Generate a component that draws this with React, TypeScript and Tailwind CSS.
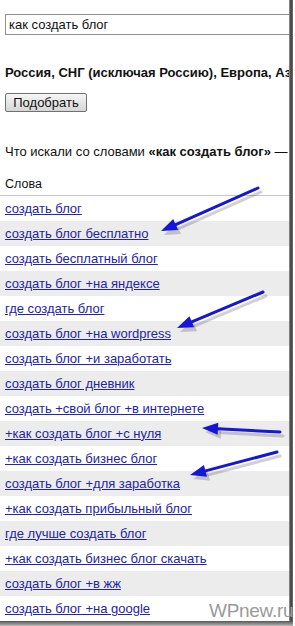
import React from "react";

const rows = [
  "создать блог",
  "создать блог бесплатно",
  "создать бесплатный блог",
  "создать блог +на яндексе",
  "где создать блог",
  "создать блог +на wordpress",
  "создать блог +и заработать",
  "создать блог дневник",
  "создать +свой блог +в интернете",
  "+как создать блог +с нуля",
  "+как создать бизнес блог",
  "создать блог +для заработка",
  "+как создать прибыльный блог",
  "где лучше создать блог",
  "+как создать бизнес блог скачать",
  "создать блог +в жж",
  "создать блог +на google",
];

type Arrow = { x1: number; y1: number; x2: number; y2: number };
const arrows: Arrow[] = [
  { x1: 258, y1: 188, x2: 161, y2: 231 },
  { x1: 263, y1: 292, x2: 177, y2: 328 },
  { x1: 280, y1: 432, x2: 202, y2: 428 },
  { x1: 277, y1: 452, x2: 190, y2: 475 },
];

function ArrowShape({ a, dx = 0, dy = 0, color }: { a: Arrow; dx?: number; dy?: number; color: string }) {
  const ang = Math.atan2(a.y2 - a.y1, a.x2 - a.x1);
  const len = 16;
  const w = 6;
  const bx = a.x2 - Math.cos(ang) * len;
  const by = a.y2 - Math.sin(ang) * len;
  const px = -Math.sin(ang) * w;
  const py = Math.cos(ang) * w;
  const pts = `${a.x2 + dx},${a.y2 + dy} ${bx + px + dx},${by + py + dy} ${bx - px + dx},${by - py + dy}`;
  return (
    <g>
      <line x1={a.x1 + dx} y1={a.y1 + dy} x2={bx + dx} y2={by + dy} stroke={color} strokeWidth={3} strokeLinecap="round" />
      <polygon points={pts} fill={color} />
    </g>
  );
}

export default function App() {
  return (
    <div className="relative w-[295px] h-[626px] overflow-hidden bg-white font-['Liberation_Sans',Arial,sans-serif]">
      <div className="flex h-[621px]">
        <div className="w-[289px] flex flex-col overflow-hidden">
          <div className="pt-[14px] pl-[5px]">
            <div className="h-[21px] border border-[#8f8f8f] border-r-0 pl-[3px] text-[13px] leading-[19px] text-[#111]">
              как создать блог
            </div>
          </div>
          <div className="mt-[30px] pl-[5px] text-[13px] leading-[15px] font-bold text-[#111] whitespace-nowrap overflow-hidden">
            Россия, СНГ (исключая Россию), Европа, Азия
          </div>
          <div className="mt-[13px] pl-[5px]">
            <div className="w-[82px] h-[19px] border border-[#707070] rounded-[2px] bg-gradient-to-b from-[#f6f6f6] to-[#d6d6d6] text-[13px] leading-[17px] text-[#111] text-center">
              Подобрать
            </div>
          </div>
          <div className="mt-[32px] pl-[5px] text-[13px] leading-[15px] text-[#111] whitespace-nowrap overflow-hidden">
            Что искали со словами <b>«как создать блог»</b> — 100
          </div>
          <div className="mt-[19px] pl-[5px] text-[12.5px] leading-[14px] text-[#111] pb-[4px] border-b border-[#c8c8c8]">
            Слова
          </div>
          <div className="flex flex-col">
            {rows.map((r, i) => (
              <div
                key={r}
                className={
                  "h-[25px] shrink-0 pl-[5px] flex items-center text-[13px] text-[#2424a8] underline whitespace-nowrap " +
                  (i % 2 === 1 ? "bg-[#ececec]" : "bg-white")
                }
              >
                {r}
              </div>
            ))}
          </div>
        </div>
        <div className="w-[4px] bg-gradient-to-r from-[#9a9a9a] via-[#3a3a3a] to-[#777]" />
        <div className="w-[2px] bg-white" />
      </div>
      <div className="h-[5px] w-[293px] bg-gradient-to-b from-[#555] to-[#bbb]" />

      <svg className="absolute left-0 top-0" width={295} height={626}>
        {arrows.map((a, i) => (
          <ArrowShape key={"s" + i} a={a} dx={3} dy={4} color="rgba(0,0,0,0.18)" />
        ))}
        {arrows.map((a, i) => (
          <ArrowShape key={"a" + i} a={a} color="#1616d8" />
        ))}
      </svg>

      <div className="absolute left-[209px] top-[600px] text-[19px] leading-[22px] text-[#9a9a9a] tracking-[-0.3px]">
        WPnew.ru
      </div>
    </div>
  );
}
